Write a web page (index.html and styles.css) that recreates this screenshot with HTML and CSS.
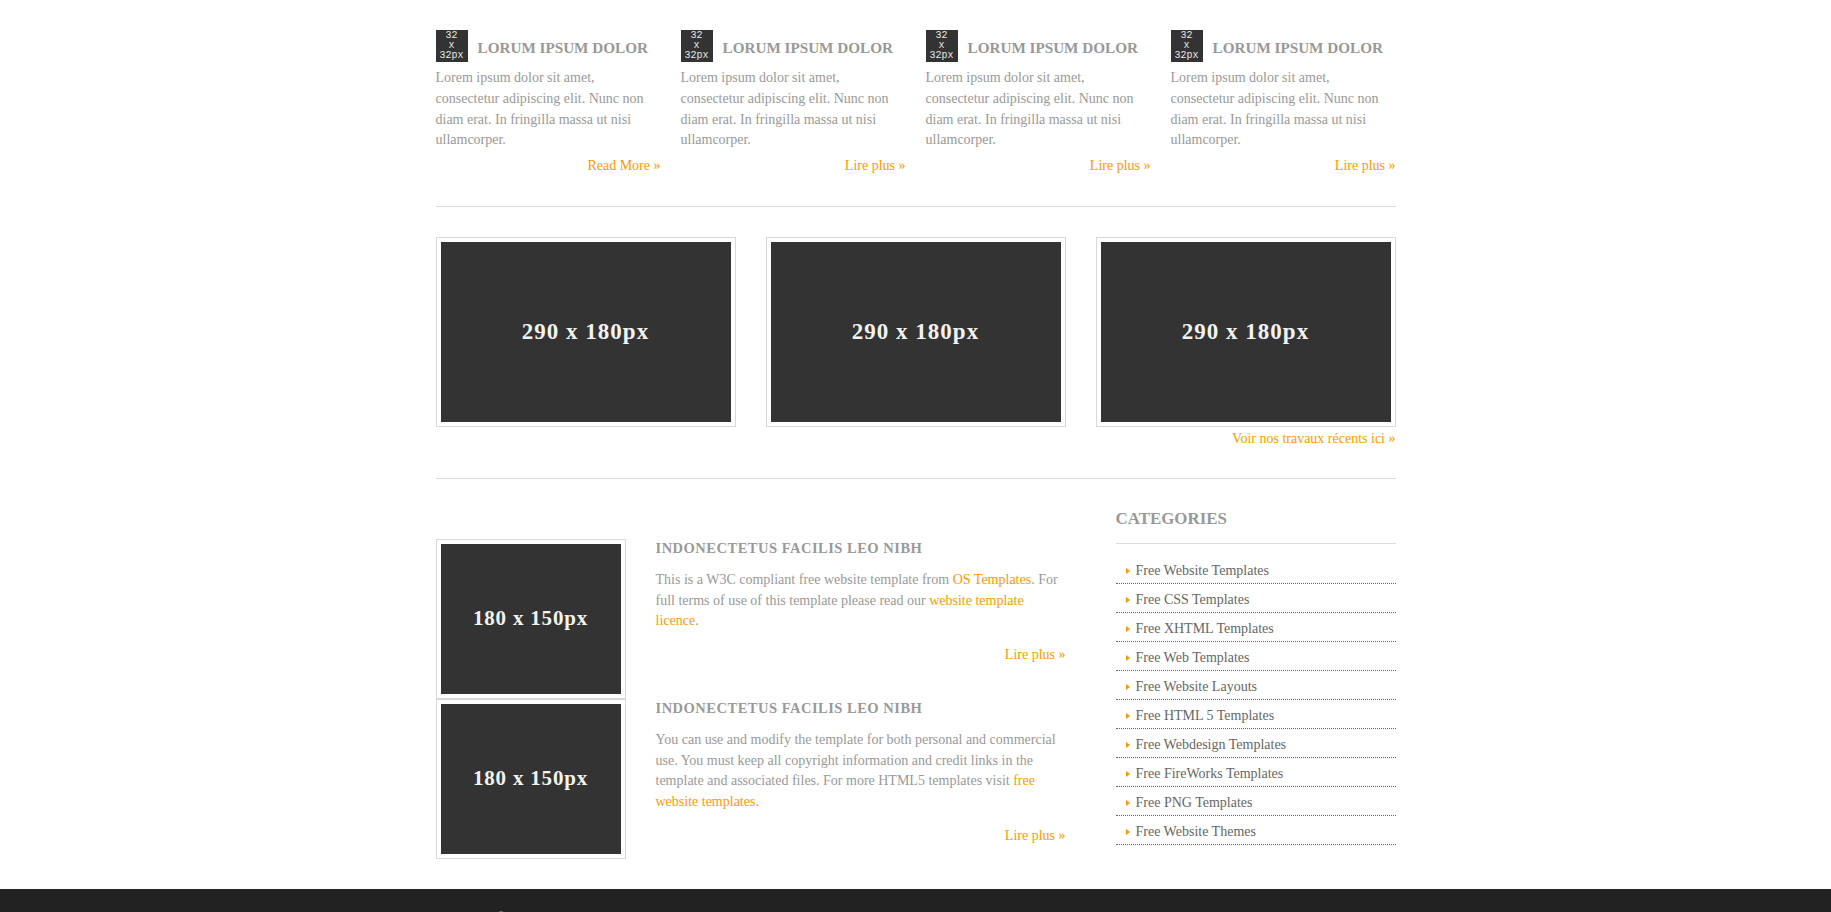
FILE: index.html
```html
<!DOCTYPE html>
<html lang="en">
<head>
<meta charset="utf-8">
<title>Template</title>
<link rel="stylesheet" href="styles.css">
</head>
<body>
<div class="wrapper">
  <section class="services">
    <article class="service">
      <header class="service-head">
        <div class="icon32"><span>32</span><span>x</span><span>32px</span></div>
        <h2 class="service-title">LORUM IPSUM DOLOR</h2>
      </header>
      <p>Lorem ipsum dolor sit amet, consectetur adipiscing elit. Nunc non diam erat. In fringilla massa ut nisi ullamcorper.</p>
      <p class="more"><a href="#">Read More &raquo;</a></p>
    </article>
    <article class="service">
      <header class="service-head">
        <div class="icon32"><span>32</span><span>x</span><span>32px</span></div>
        <h2 class="service-title">LORUM IPSUM DOLOR</h2>
      </header>
      <p>Lorem ipsum dolor sit amet, consectetur adipiscing elit. Nunc non diam erat. In fringilla massa ut nisi ullamcorper.</p>
      <p class="more"><a href="#">Lire plus &raquo;</a></p>
    </article>
    <article class="service">
      <header class="service-head">
        <div class="icon32"><span>32</span><span>x</span><span>32px</span></div>
        <h2 class="service-title">LORUM IPSUM DOLOR</h2>
      </header>
      <p>Lorem ipsum dolor sit amet, consectetur adipiscing elit. Nunc non diam erat. In fringilla massa ut nisi ullamcorper.</p>
      <p class="more"><a href="#">Lire plus &raquo;</a></p>
    </article>
    <article class="service">
      <header class="service-head">
        <div class="icon32"><span>32</span><span>x</span><span>32px</span></div>
        <h2 class="service-title">LORUM IPSUM DOLOR</h2>
      </header>
      <p>Lorem ipsum dolor sit amet, consectetur adipiscing elit. Nunc non diam erat. In fringilla massa ut nisi ullamcorper.</p>
      <p class="more"><a href="#">Lire plus &raquo;</a></p>
    </article>
  </section>

  <hr class="sep">

  <section class="gallery">
    <div class="gallery-row">
      <figure class="ph ph-lg"><div class="ph-inner">290 x 180px</div></figure>
      <figure class="ph ph-lg"><div class="ph-inner">290 x 180px</div></figure>
      <figure class="ph ph-lg"><div class="ph-inner">290 x 180px</div></figure>
    </div>
    <p class="more more-flush"><a href="#">Voir nos travaux récents ici &raquo;</a></p>
  </section>

  <hr class="sep sep-tight">

  <div class="content">
    <main class="main">
      <article class="post">
        <figure class="ph ph-sm"><div class="ph-inner">180 x 150px</div></figure>
        <div class="post-body">
          <h3 class="post-title">INDONECTETUS FACILIS LEO NIBH</h3>
          <p>This is a W3C compliant free website template from <a href="#">OS Templates</a>. For full terms of use of this template please read our <a href="#">website template licence</a>.</p>
          <p class="more"><a href="#">Lire plus &raquo;</a></p>
        </div>
      </article>
      <article class="post">
        <figure class="ph ph-sm"><div class="ph-inner">180 x 150px</div></figure>
        <div class="post-body">
          <h3 class="post-title">INDONECTETUS FACILIS LEO NIBH</h3>
          <p>You can use and modify the template for both personal and commercial use. You must keep all copyright information and credit links in the template and associated files. For more HTML5 templates visit <a href="#">free website templates</a>.</p>
          <p class="more"><a href="#">Lire plus &raquo;</a></p>
        </div>
      </article>
    </main>
    <aside class="sidebar">
      <h2 class="side-title">CATEGORIES</h2>
      <ul class="cat-list">
        <li><a href="#">Free Website Templates</a></li>
        <li><a href="#">Free CSS Templates</a></li>
        <li><a href="#">Free XHTML Templates</a></li>
        <li><a href="#">Free Web Templates</a></li>
        <li><a href="#">Free Website Layouts</a></li>
        <li><a href="#">Free HTML 5 Templates</a></li>
        <li><a href="#">Free Webdesign Templates</a></li>
        <li><a href="#">Free FireWorks Templates</a></li>
        <li><a href="#">Free PNG Templates</a></li>
        <li><a href="#">Free Website Themes</a></li>
      </ul>
    </aside>
  </div>
</div>

<footer class="footer">
  <div class="footer-inner">
    <p>Copyright &copy; 2012 - All Rights Reserved - <a href="#">Domain Name</a></p>
    <p>Template by <a href="#">OS Templates</a></p>
  </div>
</footer>
</body>
</html>
```

FILE: styles.css
```css
html, body {
  margin: 0;
  padding: 0;
  background: #fff;
}

body {
  font-family: "Liberation Serif", "Times New Roman", serif;
  font-size: 14px;
  color: #999;
}

a {
  color: #f90;
  text-decoration: none;
}

.wrapper {
  width: 960px;
  margin: 0 auto;
  padding-top: 30px;
}

/* Services row */
.services {
  display: grid;
  grid-template-columns: repeat(4, 225px);
  column-gap: 20px;
}

.service-head {
  display: flex;
  align-items: center;
  gap: 10px;
  height: 32px;
  margin-bottom: 6px;
}

.icon32 {
  flex: none;
  width: 32px;
  height: 32px;
  background: #333;
  color: #e8e8e8;
  font-family: "Liberation Mono", "DejaVu Sans Mono", monospace;
  font-size: 10px;
  line-height: 10px;
  display: flex;
  flex-direction: column;
  align-items: center;
  padding-top: 1px;
  box-sizing: border-box;
}

.service-title {
  margin: 0;
  padding-top: 4px;
  font-size: 15.2px;
  line-height: 20px;
  font-weight: bold;
  color: #999;
}

.service p {
  margin: 0;
  line-height: 20.8px;
}

.more {
  text-align: right;
  line-height: 20.8px;
}

.service .more {
  margin-top: 5px;
}

.more-flush {
  margin: 2px 0 0;
}

.sep {
  border: 0;
  border-top: 1px solid #ddd;
  height: 0;
  margin: 29px 0 30px;
}

.sep-tight {
  margin: 28px 0 0;
}

/* Gallery */
.gallery-row {
  display: flex;
  gap: 30px;
}

.ph {
  margin: 0;
  border: 1px solid #d8d8d8;
  padding: 4px;
  flex: none;
}

.ph-inner {
  background: #333;
  color: #f2f2f2;
  display: flex;
  align-items: center;
  justify-content: center;
}

.ph-lg .ph-inner {
  width: 290px;
  height: 180px;
  font-size: 23px;
  font-weight: bold;
  letter-spacing: 1px;
}

.ph-sm .ph-inner {
  width: 180px;
  height: 150px;
  font-size: 21px;
  font-weight: bold;
  letter-spacing: 0.8px;
}

/* Content */
.content {
  display: flex;
  gap: 50px;
  padding-bottom: 30px;
}

.main {
  width: 630px;
  padding-top: 60px;
}

.post {
  display: flex;
  gap: 30px;
  height: 160px;
}

.post-body {
  width: 410px;
}

.post-title {
  margin: 0;
  font-size: 14.5px;
  letter-spacing: 0.5px;
  line-height: 18px;
  font-weight: bold;
  color: #999;
}

.post-body p {
  margin: 13px 0 0;
  line-height: 20.8px;
}

.post-body .more {
  margin-top: 13px;
}

/* Sidebar */
.sidebar {
  width: 280px;
  padding-top: 30px;
}

.side-title {
  margin: 0 0 11px;
  font-size: 16.9px;
  line-height: 20px;
  font-weight: bold;
  color: #999;
  padding-bottom: 14px;
  border-bottom: 1px solid #ddd;
}

.cat-list {
  list-style: none;
  margin: 0;
  padding: 0;
}

.cat-list li {
  height: 25px;
  padding-top: 3px;
  line-height: 25px;
  border-bottom: 1px dotted #666;
  padding-left: 10px;
}

.cat-list li::before {
  content: "";
  display: inline-block;
  width: 0;
  height: 0;
  border-left: 4px solid #f90;
  border-top: 3px solid transparent;
  border-bottom: 3px solid transparent;
  margin-right: 6px;
  vertical-align: 1px;
}

.cat-list a {
  color: #666;
}

/* Footer */
.footer {
  background: #222;
  color: #999;
}

.footer-inner {
  width: 960px;
  margin: 0 auto;
  display: flex;
  justify-content: space-between;
  padding: 19px 0;
}

.footer-inner p {
  margin: 0;
  line-height: 20px;
}

.footer-inner a {
  color: #999;
}
```
